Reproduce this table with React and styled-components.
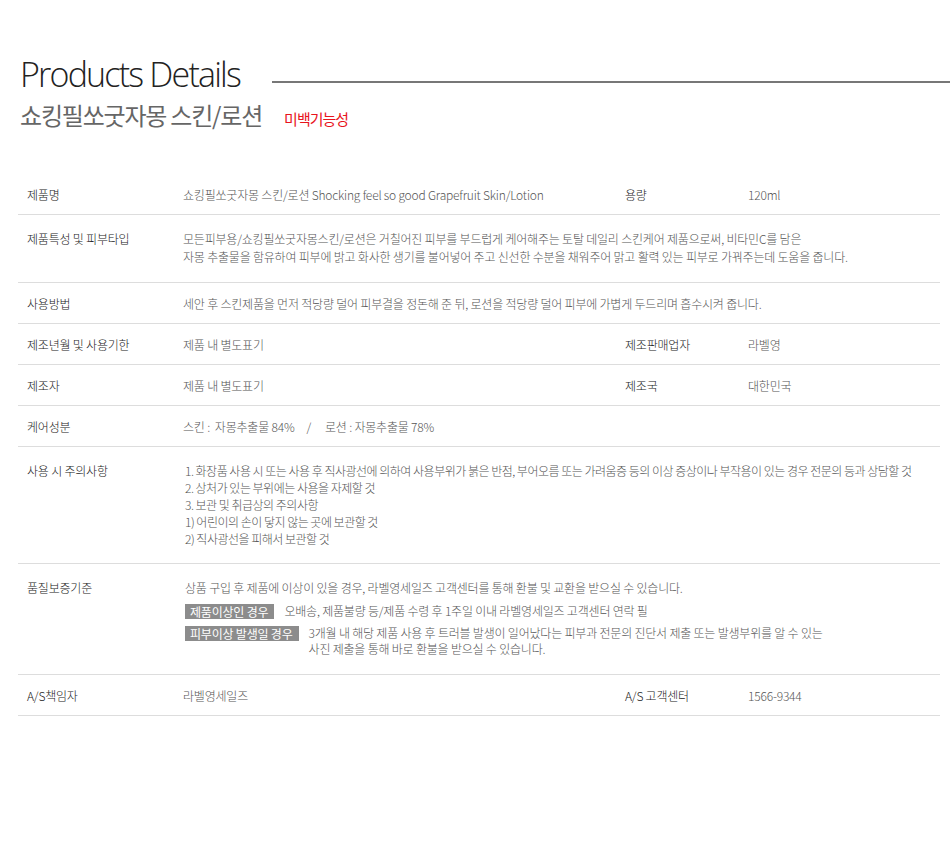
import React from "react";
import styled, { createGlobalStyle } from "styled-components";

const GlobalStyle = createGlobalStyle`
    body {
        margin: 0;
        background: #fff;
        font-family: "Noto Sans CJK KR", sans-serif;
    }
`;

const Page = styled.div`
    width: 950px;
    padding-top: 57px;
    padding-bottom: 120px;
`;

const Header = styled.div`
    display: flex;
    align-items: flex-start;
    padding-left: 20px;
`;

const Title = styled.h1`
    margin: 0;
    font-family: "Open Sans", sans-serif;
    font-weight: 300;
    font-size: 34px;
    line-height: 1;
    letter-spacing: -1.8px;
    color: #222;
`;

const TitleLine = styled.div`
    flex: 1;
    height: 2px;
    margin-top: 24px;
    margin-left: 32px;
    background: #777;
`;

const SubHeader = styled.div`
    display: flex;
    align-items: baseline;
    gap: 22px;
    padding-left: 20px;
    margin-top: 7px;
`;

const SubTitle = styled.h2`
    margin: 0;
    font-family: "Noto Sans CJK KR", sans-serif;
    font-weight: 400;
    font-size: 24px;
    line-height: 34px;
    letter-spacing: -1.2px;
    color: #666;
`;

const Badge = styled.span`
    font-family: "Noto Sans CJK KR", sans-serif;
    font-size: 15px;
    letter-spacing: -1px;
    color: #e8141c;
`;

const Table = styled.div`
    width: 922px;
    margin-left: 18px;
    margin-top: 42px;
    font-size: 12px;
    font-weight: 300;
    letter-spacing: -0.2px;
`;

const Row = styled.div`
    display: grid;
    grid-template-columns: 156px 442px 123px 1fr;
    padding: ${(p) => (p.$tall ? "15px 0 16px" : "12px 0 10px")};
    padding-bottom: ${(p) => p.$extra && "17px"};
    border-bottom: 1px solid #ddd;
    line-height: 18px;
`;

const Label = styled.div`
    padding-left: 9px;
    color: #222;
`;

const Value = styled.div`
    padding-left: 9px;
    color: #555;
    grid-column: ${(p) => (p.$wide ? "2 / 5" : "auto")};
`;

const List = styled.div`
    line-height: 17px;
    padding-left: 2px;
    letter-spacing: -0.5px;
    white-space: nowrap;
`;

const Slash = styled.span`
    margin: 0 14px 0 12px;
`;

const TagLine = styled.div`
    display: flex;
    align-items: flex-start;
    margin-top: 6px;
    margin-left: 2px;
    line-height: 16px;
`;

const Tag = styled.span`
    flex-shrink: 0;
    margin-right: 10px;
    margin-top: 1px;
    padding: 0 6px 0 5px;
    background: #8c8c8c;
    color: #fff;
    font-weight: 400;
    line-height: 15px;
`;

const Lead = styled.div`
    padding-left: 2px;
`;

const App = () => {
    return (
        <Page>
            <GlobalStyle />
            <Header>
                <Title>Products Details</Title>
                <TitleLine />
            </Header>
            <SubHeader>
                <SubTitle>쇼킹필쏘굿자몽 스킨/로션</SubTitle>
                <Badge>미백기능성</Badge>
            </SubHeader>

            <Table>
                <Row>
                    <Label>제품명</Label>
                    <Value>쇼킹필쏘굿자몽 스킨/로션 Shocking feel so good Grapefruit Skin/Lotion</Value>
                    <Label>용량</Label>
                    <Value>120ml</Value>
                </Row>
                <Row $tall>
                    <Label>제품특성 및 피부타입</Label>
                    <Value $wide>
                        모든피부용/쇼킹필쏘굿자몽스킨/로션은 거칠어진 피부를 부드럽게 케어해주는 토탈 데일리 스킨케어 제품으로써, 비타민C를 담은
                        <br />
                        자몽 추출물을 함유하여 피부에 밝고 화사한 생기를 불어넣어 주고 신선한 수분을 채워주어 맑고 활력 있는 피부로 가꿔주는데 도움을 줍니다.
                    </Value>
                </Row>
                <Row>
                    <Label>사용방법</Label>
                    <Value $wide>세안 후 스킨제품을 먼저 적당량 덜어 피부결을 정돈해 준 뒤, 로션을 적당량 덜어 피부에 가볍게 두드리며 흡수시켜 줍니다.</Value>
                </Row>
                <Row>
                    <Label>제조년월 및 사용기한</Label>
                    <Value>제품 내 별도표기</Value>
                    <Label>제조판매업자</Label>
                    <Value>라벨영</Value>
                </Row>
                <Row>
                    <Label>제조자</Label>
                    <Value>제품 내 별도표기</Value>
                    <Label>제조국</Label>
                    <Value>대한민국</Value>
                </Row>
                <Row>
                    <Label>케어성분</Label>
                    <Value $wide>
                        스킨 :&nbsp; 자몽추출물 84%<Slash>/</Slash>로션 : 자몽추출물 78%
                    </Value>
                </Row>
                <Row $tall>
                    <Label>사용 시 주의사항</Label>
                    <Value $wide>
                        <List>
                            1. 화장품 사용 시 또는 사용 후 직사광선에 의하여 사용부위가 붉은 반점, 부어오름 또는 가려움증 등의 이상 증상이나 부작용이 있는 경우 전문의 등과 상담할 것
                            <br />
                            2. 상처가 있는 부위에는 사용을 자제할 것
                            <br />
                            3. 보관 및 취급상의 주의사항
                            <br />
                            1) 어린이의 손이 닿지 않는 곳에 보관할 것
                            <br />
                            2) 직사광선을 피해서 보관할 것
                        </List>
                    </Value>
                </Row>
                <Row $tall $extra>
                    <Label>품질보증기준</Label>
                    <Value $wide>
                        <Lead>상품 구입 후 제품에 이상이 있을 경우, 라벨영세일즈 고객센터를 통해 환불 및 교환을 받으실 수 있습니다.</Lead>
                        <TagLine>
                            <Tag>제품이상인 경우</Tag>
                            <span>오배송, 제품불량 등/제품 수령 후 1주일 이내 라벨영세일즈 고객센터 연락 필</span>
                        </TagLine>
                        <TagLine>
                            <Tag>피부이상 발생일 경우</Tag>
                            <span>
                                3개월 내 해당 제품 사용 후 트러블 발생이 일어났다는 피부과 전문의 진단서 제출 또는 발생부위를 알 수 있는
                                <br />
                                사진 제출을 통해 바로 환불을 받으실 수 있습니다.
                            </span>
                        </TagLine>
                    </Value>
                </Row>
                <Row>
                    <Label>A/S책임자</Label>
                    <Value>라벨영세일즈</Value>
                    <Label>A/S 고객센터</Label>
                    <Value>1566-9344</Value>
                </Row>
            </Table>
        </Page>
    );
};

export default App;
